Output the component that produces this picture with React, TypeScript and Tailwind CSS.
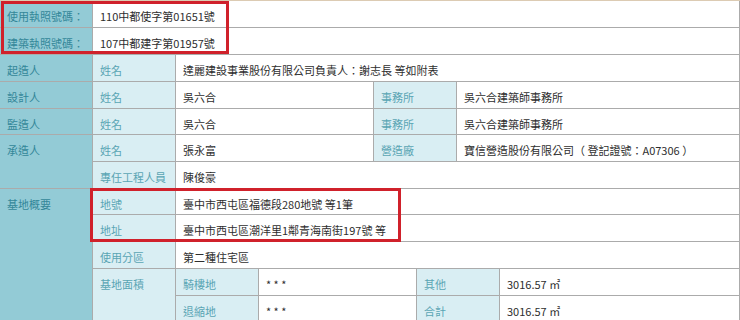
import React from "react";

const D = "bg-[#93cbd6] text-[#348799]";
const L = "bg-[#d9eef3] text-[#5aa5b4]";
const V = "bg-white text-[#2e2e2e]";

function Cell({ c, p, children }: { c: string; p: string; children?: React.ReactNode }) {
  return (
    <div className={`${c} ${p} px-[7px] pt-[7px] leading-[16px] whitespace-nowrap overflow-hidden`}>
      {children}
    </div>
  );
}

export default function App() {
  return (
    <div
      className="relative w-[740px] h-[320px] overflow-hidden bg-white text-[11px]"
      style={{ fontFamily: '"Noto Sans CJK TC", "Noto Sans", sans-serif' }}
    >
      <div className="border-t border-[#dccbb3]">
        <div className="grid grid-cols-[92px_82px_82px_114px_42px_39px_42px_239px] grid-rows-[26px_26px_26px_26px_25px_26px_26px_25px_26px_26px_26px_26px] gap-px bg-[#ababab] pr-px">
          {/* rows 1-2 */}
          <Cell c={D} p="col-start-1 row-start-1">使用執照號碼：</Cell>
          <Cell c={V} p="col-start-2 col-span-7 row-start-1">110中都使字第01651號</Cell>
          <Cell c={D} p="col-start-1 row-start-2">建築執照號碼：</Cell>
          <Cell c={V} p="col-start-2 col-span-7 row-start-2">107中都建字第01957號</Cell>

          {/* row 3 */}
          <Cell c={D} p="col-start-1 row-start-3">起造人</Cell>
          <Cell c={L} p="col-start-2 row-start-3">姓名</Cell>
          <Cell c={V} p="col-start-3 col-span-6 row-start-3">達麗建設事業股份有限公司負責人：謝志長 等如附表</Cell>

          {/* row 4 */}
          <Cell c={D} p="col-start-1 row-start-4">設計人</Cell>
          <Cell c={L} p="col-start-2 row-start-4">姓名</Cell>
          <Cell c={V} p="col-start-3 col-span-2 row-start-4">吳六合</Cell>
          <Cell c={L} p="col-start-5 col-span-2 row-start-4">事務所</Cell>
          <Cell c={V} p="col-start-7 col-span-2 row-start-4">吳六合建築師事務所</Cell>

          {/* row 5 */}
          <Cell c={D} p="col-start-1 row-start-5">監造人</Cell>
          <Cell c={L} p="col-start-2 row-start-5">姓名</Cell>
          <Cell c={V} p="col-start-3 col-span-2 row-start-5">吳六合</Cell>
          <Cell c={L} p="col-start-5 col-span-2 row-start-5">事務所</Cell>
          <Cell c={V} p="col-start-7 col-span-2 row-start-5">吳六合建築師事務所</Cell>

          {/* rows 6-7 */}
          <Cell c={D} p="col-start-1 row-start-6 row-span-2">承造人</Cell>
          <Cell c={L} p="col-start-2 row-start-6">姓名</Cell>
          <Cell c={V} p="col-start-3 col-span-2 row-start-6">張永富</Cell>
          <Cell c={L} p="col-start-5 col-span-2 row-start-6">營造廠</Cell>
          <Cell c={V} p="col-start-7 col-span-2 row-start-6">寶信營造股份有限公司（ 登記證號：A07306 ）</Cell>
          <Cell c={L} p="col-start-2 row-start-7">專任工程人員</Cell>
          <Cell c={V} p="col-start-3 col-span-6 row-start-7">陳俊豪</Cell>

          {/* rows 8-12 */}
          <Cell c={D} p="col-start-1 row-start-8 row-span-5">基地概要</Cell>
          <Cell c={L} p="col-start-2 row-start-8">地號</Cell>
          <Cell c={V} p="col-start-3 col-span-6 row-start-8">臺中市西屯區福德段280地號 等1筆</Cell>
          <Cell c={L} p="col-start-2 row-start-9">地址</Cell>
          <Cell c={V} p="col-start-3 col-span-6 row-start-9">臺中市西屯區潮洋里1鄰青海南街197號 等</Cell>
          <Cell c={L} p="col-start-2 row-start-10">使用分區</Cell>
          <Cell c={V} p="col-start-3 col-span-6 row-start-10">第二種住宅區</Cell>
          <Cell c={L} p="col-start-2 row-start-11 row-span-2">基地面積</Cell>
          <Cell c={L} p="col-start-3 row-start-11">騎樓地</Cell>
          <Cell c={V} p="col-start-4 col-span-2 row-start-11">* * *</Cell>
          <Cell c={L} p="col-start-6 col-span-2 row-start-11">其他</Cell>
          <Cell c={V} p="col-start-8 row-start-11">3016.57 ㎡</Cell>
          <Cell c={L} p="col-start-3 row-start-12">退縮地</Cell>
          <Cell c={V} p="col-start-4 col-span-2 row-start-12">* * *</Cell>
          <Cell c={L} p="col-start-6 col-span-2 row-start-12">合計</Cell>
          <Cell c={V} p="col-start-8 row-start-12">3016.57 ㎡</Cell>
        </div>
      </div>

      {/* red highlight boxes */}
      <div className="absolute left-[1px] top-[1px] w-[228px] h-[53px] border-[3px] border-[#d0212b] pointer-events-none" />
      <div className="absolute left-[90px] top-[188px] w-[311px] h-[54px] border-[3px] border-[#d0212b] pointer-events-none" />
    </div>
  );
}
